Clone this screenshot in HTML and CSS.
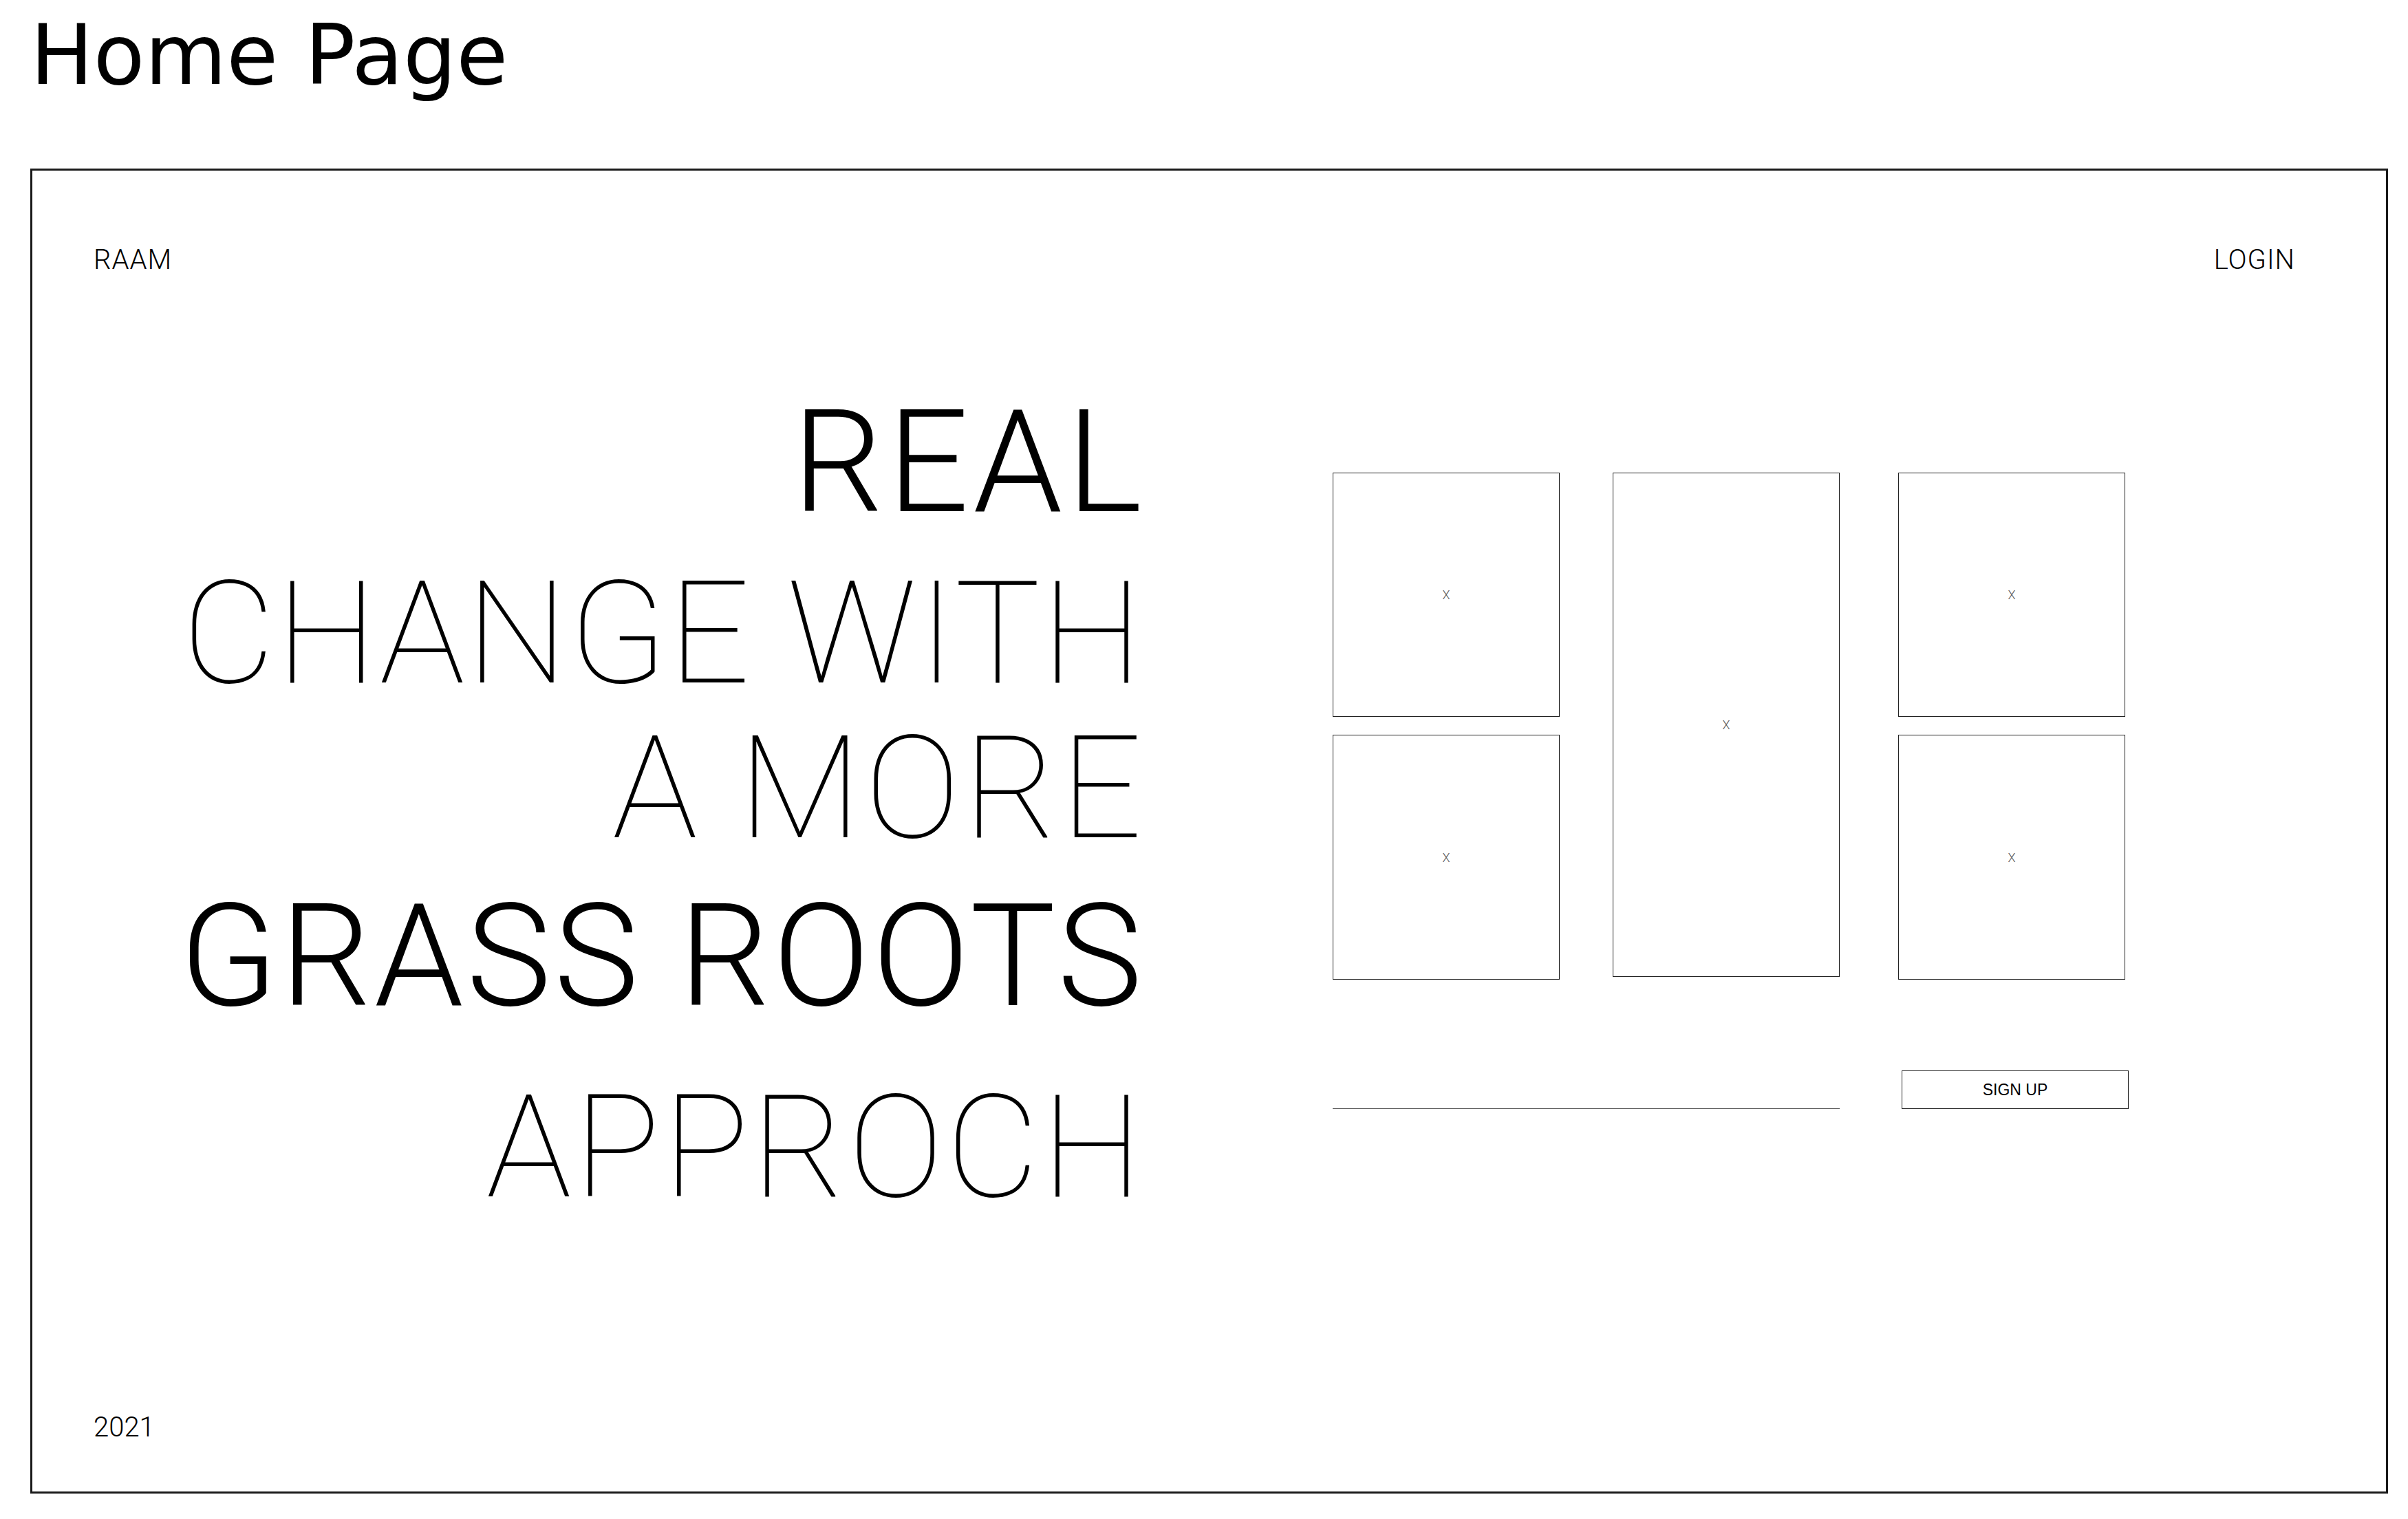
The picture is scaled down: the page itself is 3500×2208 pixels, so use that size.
FILE: index.html
```html
<!DOCTYPE html>
<html lang="en">
<head>
    <meta charset="UTF-8">
    <meta name="viewport" content="width=device-width, initial-scale=1.0">
    <title>Home Page</title>
    <link rel="stylesheet" href="styles.css">
</head>
<body>
    <h1 class="page-title">Home Page</h1>

    <div class="frame">
        <header class="top-bar">
            <span class="brand">RAAM</span>
            <a class="login" href="#">LOGIN</a>
        </header>

        <main class="hero">
            <div class="headline">
                <div class="line light real">REAL</div>
                <div class="line thin change">CHANGE WITH</div>
                <div class="line thin more">A MORE</div>
                <div class="line light roots">GRASS ROOTS</div>
                <div class="line thin approach">APPROCH</div>
            </div>

            <div class="side">
                <div class="gallery">
                    <div class="photo">X</div>
                    <div class="photo tall">X</div>
                    <div class="photo right">X</div>
                    <div class="photo">X</div>
                    <div class="photo right">X</div>
                </div>

                <form class="signup" onsubmit="return false">
                    <input type="email" class="email">
                    <button type="submit">SIGN UP</button>
                </form>
            </div>
        </main>

        <footer class="year">2021</footer>
    </div>
</body>
</html>
```

FILE: styles.css
```css
* {
    box-sizing: border-box;
}

body {
    margin: 0;
    padding: 19px 0 0 44px;
    background: #fff;
    color: #000;
    font-family: Roboto, "Liberation Sans", Arial, sans-serif;
}

.page-title {
    margin: 0 0 104px;
    font-family: "DejaVu Sans", sans-serif;
    font-size: 122px;
    line-height: 122px;
    font-weight: normal;
}

.frame {
    display: flex;
    flex-direction: column;
    width: 3427px;
    height: 1926px;
    padding: 106px 133px 69px 89px;
    border: 3px solid #1a1a1a;
}

.top-bar {
    display: flex;
    justify-content: space-between;
    font-size: 40px;
    line-height: 48px;
    font-weight: 300;
    letter-spacing: 1px;
}

.login {
    margin-right: -1px;
    color: #000;
    text-decoration: none;
}

.hero {
    display: flex;
    align-items: flex-start;
}

/* big slogan on the left */
.headline {
    width: 1524px;
    margin-top: 166px;
    text-align: right;
    font-size: 208px;
    line-height: 208px;
    white-space: nowrap;
}

.line.light {
    font-weight: 300;
}

.line.thin {
    font-weight: 100;
}

.real {
    letter-spacing: 6px;
    margin-right: -6px;
}

.change {
    margin-top: 41px;
    letter-spacing: 2px;
    margin-right: -2px;
}

.more {
    margin-top: 17px;
    letter-spacing: 5px;
    margin-right: -5px;
}

.roots {
    margin-top: 36px;
    letter-spacing: 4px;
    margin-right: -4px;
}

.approach {
    margin-top: 70px;
    letter-spacing: 4px;
    margin-right: -4px;
}

/* image placeholders */
.side {
    margin-left: 277px;
    margin-top: 285px;
}

.gallery {
    display: grid;
    grid-template-columns: 330px 330px 338px;
    grid-template-rows: 355px 356px;
    column-gap: 77px;
    row-gap: 26px;
}

.photo {
    display: flex;
    justify-content: center;
    align-items: center;
    border: 1px solid #222;
    font-size: 18px;
    font-weight: 300;
    color: #555;
}

.photo.right {
    margin-left: 8px;
}

.photo.tall {
    grid-row: span 2;
    align-self: start;
    height: 733px;
}

.signup {
    display: flex;
    align-items: flex-end;
    margin-top: 132px;
}

.email {
    width: 737px;
    height: 56px;
    padding: 0;
    border: none;
    border-bottom: 1px solid #555;
    background: transparent;
    outline: none;
}

.signup button {
    width: 330px;
    height: 56px;
    margin-left: 90px;
    border: 1px solid #222;
    background: #fff;
    color: #000;
    font-family: "Liberation Sans", Arial, sans-serif;
    font-size: 23px;
    cursor: pointer;
}

.year {
    margin-top: auto;
    font-size: 40px;
    line-height: 48px;
    font-weight: 300;
}
```
